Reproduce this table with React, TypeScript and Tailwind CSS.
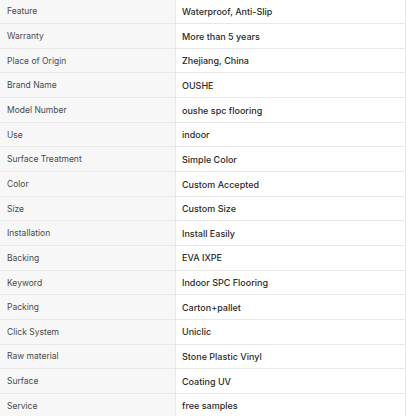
const specs: [string, string][] = [
  ["Feature", "Waterproof, Anti-Slip"],
  ["Warranty", "More than 5 years"],
  ["Place of Origin", "Zhejiang, China"],
  ["Brand Name", "OUSHE"],
  ["Model Number", "oushe spc flooring"],
  ["Use", "indoor"],
  ["Surface Treatment", "Simple Color"],
  ["Color", "Custom Accepted"],
  ["Size", "Custom Size"],
  ["Installation", "Install Easily"],
  ["Backing", "EVA IXPE"],
  ["Keyword", "Indoor SPC Flooring"],
  ["Packing", "Carton+pallet"],
  ["Click System", "Uniclic"],
  ["Raw material", "Stone Plastic Vinyl"],
  ["Surface", "Coating UV"],
  ["Service", "free samples"],
];

export default function App() {
  return (
    <div className="w-[416px] h-[416px] overflow-hidden bg-white" style={{ fontFamily: "Inter, 'Noto Sans', sans-serif" }}>
      <div className="w-[406px] mt-[-0.67px] border-r border-[#e8e8e8]">
        {specs.map(([k, v]) => (
          <div key={k} className="flex h-[24.67px] border-b border-[#e8e8e8]">
            <div className="w-[176px] shrink-0 bg-[#f7f7f7] border-r border-[#e8e8e8] pl-[7px] pt-[1px] flex items-center text-[8.5px] text-[#4a4a4a]">
              {k}
            </div>
            <div className="flex-1 pl-[6px] pt-[1px] flex items-center text-[9px] text-[#2a2a2a] font-medium">{v}</div>
          </div>
        ))}
      </div>
    </div>
  );
}
